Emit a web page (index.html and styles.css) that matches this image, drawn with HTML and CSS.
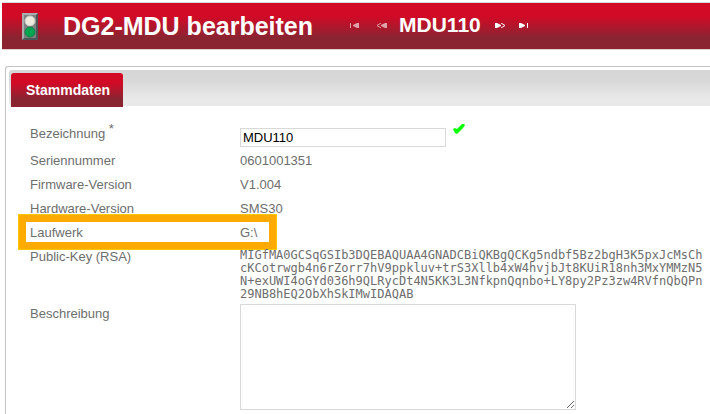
FILE: index.html
```
<!DOCTYPE html>
<html lang="de">
<head>
    <meta charset="UTF-8">
    <meta name="viewport" content="width=device-width, initial-scale=1.0">
    <title>DG2-MDU bearbeiten</title>
    <link rel="stylesheet" href="styles.css">
</head>
<body>
    <header class="titlebar">
        <svg class="lamp" width="16" height="27" viewBox="0 0 16 27">
            <rect width="16" height="27" fill="#4f5657"/>
            <path d="M0 27V0h16l-2 2H2v23z" fill="#a9adad"/>
            <rect x="2" y="2" width="12" height="23" fill="#7c8283"/>
            <circle cx="8" cy="8" r="5" fill="#eeeade" stroke="#c9c8c0"/>
            <circle cx="8" cy="19" r="5" fill="#00a54f" stroke="#168046"/>
        </svg>
        <h1>DG2-MDU bearbeiten</h1>
        <nav class="pager">
            <button type="button" aria-label="Erster" disabled>
                <svg width="9" height="5" viewBox="0 0 9 5"><path d="M0 0h1v5H0zM9 0v5H7L3 3V2l4-2z"/></svg>
            </button>
            <button type="button" aria-label="Vorheriger" disabled>
                <svg width="11" height="5" viewBox="0 0 11 5"><path d="M11 0v5H9L5 3V2l4-2z"/><path class="line" d="M5 0L1 2.5 5 5"/></svg>
            </button>
            <strong>MDU110</strong>
            <button type="button" aria-label="Nächster">
                <svg width="11" height="5" viewBox="0 0 11 5"><path d="M0 0v5h2l4-2V2L2 0z"/><path class="line" d="M6 0l4 2.500L6 5"/></svg>
            </button>
            <button type="button" aria-label="Letzter">
                <svg width="9" height="5" viewBox="0 0 9 5"><path d="M8 0h1v5H8zM0 0v5h2l4-2V2L2 0z"/></svg>
            </button>
        </nav>
    </header>

    <main class="panel">
        <div class="tabs">
            <button type="button" class="tab">Stammdaten</button>
        </div>

        <form class="fields">
            <div class="row row-input">
                <label for="bezeichnung">Bezeichnung <sup>*</sup></label>
                <div class="value">
                    <input type="text" id="bezeichnung" name="bezeichnung" value="MDU110" required>
                    <svg class="check" width="12" height="10" viewBox="0 0 12 10"><path d="M0 5l2-1 2 1 5-5h2l1 1-2 3-6 6-2-1z" fill="#00ff00"/></svg>
                </div>
            </div>
            <div class="row">
                <span>Seriennummer</span>
                <span>0601001351</span>
            </div>
            <div class="row">
                <span>Firmware-Version</span>
                <span>V1.004</span>
            </div>
            <div class="row">
                <span>Hardware-Version</span>
                <span>SMS30</span>
            </div>
            <div class="row marked">
                <span>Laufwerk</span>
                <span>G:\</span>
            </div>
            <div class="row">
                <span>Public-Key (RSA)</span>
                <code>MIGfMA0GCSqGSIb3DQEBAQUAA4GNADCBiQKBgQCKg5ndbf5Bz2bgH3K5pxJcMsCh<br>cKCotrwgb4n6rZorr7hV9ppkluv+trS3Xllb4xW4hvjbJt8KUiR18nh3MxYMMzN5<br>N+exUWI4oGYd036h9QLRycDt4N5KK3L3NfkpnQqnbo+LY8py2Pz3zw4RVfnQbQPn<br>29NB8hEQ2ObXhSkIMwIDAQAB</code>
            </div>
            <div class="row row-text">
                <label for="beschreibung">Beschreibung</label>
                <textarea id="beschreibung" name="beschreibung"></textarea>
            </div>
        </form>
    </main>
</body>
</html>
```

FILE: styles.css
```
*,
*::after {
    box-sizing: border-box;
}
body {
    display: flex;
    flex-direction: column;
    min-height: 100vh;
    margin: 0;
    padding: 2px 0 0 2px;
    background-color: #fff;
    color: #6e6e6e;
    font-family: "Liberation Sans", Arial, sans-serif;
    font-size: 13px;
    line-height: 24px;
}
button {
    margin: 0;
    padding: 0;
    border: none;
    background: none;
    font-family: inherit;
}
.titlebar {
    display: flex;
    align-items: center;
    height: 48px;
    padding: 0 20px;
    border-top: 1px solid #d9d9d9;
    border-bottom: 1px solid #e3cfd2;
    background: linear-gradient(#d30a26 0%, #d30a26 28%, #8b2431 75%, #8b2431 100%);
    color: #fff;
}
.titlebar h1 {
    margin: 0 0 0 25px;
    font-size: 25px;
    white-space: nowrap;
}
.pager {
    display: flex;
    align-items: center;
    margin-left: 37px;
    padding-bottom: 2px;
}
.pager button {
    display: flex;
    fill: #fff;
}
.pager button + button {
    margin-left: 17px;
}
.pager strong ~ button + button {
    margin-left: 13px;
}
.pager button:disabled {
    opacity: 0.6;
}
.pager .line {
    fill: none;
    stroke: #fff;
}
.pager strong {
    margin: 0 14px 0 12px;
    font-size: 21px;
}
.panel {
    flex: 1;
    margin: 16px 0 0 3px;
    padding: 3px 0 0 3px;
    border: 1px solid #c3c3c3;
    border-width: 1px 0 0 1px;
    border-radius: 3px 0 0 0;
}
.tabs {
    display: flex;
    align-items: flex-end;
    height: 36px;
    padding-left: 2px;
    border-radius: 3px 0 0 3px;
    background: linear-gradient(#d6d6d6 0%, #d8d8d8 30%, #e9e9e9 80%, #e9e9e9 100%);
}
.tab {
    height: 34px;
    margin-bottom: -1px;
    padding: 0 13px 0 15px;
    border-radius: 3px 3px 0 0;
    background: linear-gradient(#d30a26 0%, #d30a26 28%, #8b2431 75%, #8b2431 100%);
    color: #fff;
    font-size: 14px;
    font-weight: bold;
}
.fields {
    padding: 16px 6px 4px 21px;
}
.row {
    position: relative;
    display: grid;
    grid-template-columns: 210px 1fr;
}
.row-input {
    height: 27px;
}
.row-text {
    line-height: 20px;
}
.row sup {
    font-size: 13px;
    line-height: 0;
}
.value {
    display: flex;
    align-items: flex-start;
    padding-top: 2px;
}
input,
textarea {
    border: 1px solid #d9d9d9;
    background-color: #fff;
    color: #000;
    font-family: inherit;
    font-size: 13px;
}
input {
    width: 206px;
    height: 19px;
    margin-top: 4px;
    padding: 0 2px;
}
.check {
    margin-left: 7px;
}
.marked::after {
    content: "";
    position: absolute;
    top: -7px;
    left: -12px;
    width: 259px;
    height: 36px;
    border: 8px solid #ffaa00;
    outline: 1px solid #ffc800;
    outline-offset: -1px;
}
.row code {
    padding: 4px 0 3px;
    font-family: "DejaVu Sans Mono", monospace;
    font-size: 12px;
    line-height: 13px;
}
textarea {
    width: 336px;
    height: 106px;
    resize: both;
}
@media (max-width: 600px) {
    .row {
        grid-template-columns: 140px 1fr;
    }
    .row code {
        overflow-wrap: anywhere;
    }
    textarea {
        width: 100%;
    }
}
```
